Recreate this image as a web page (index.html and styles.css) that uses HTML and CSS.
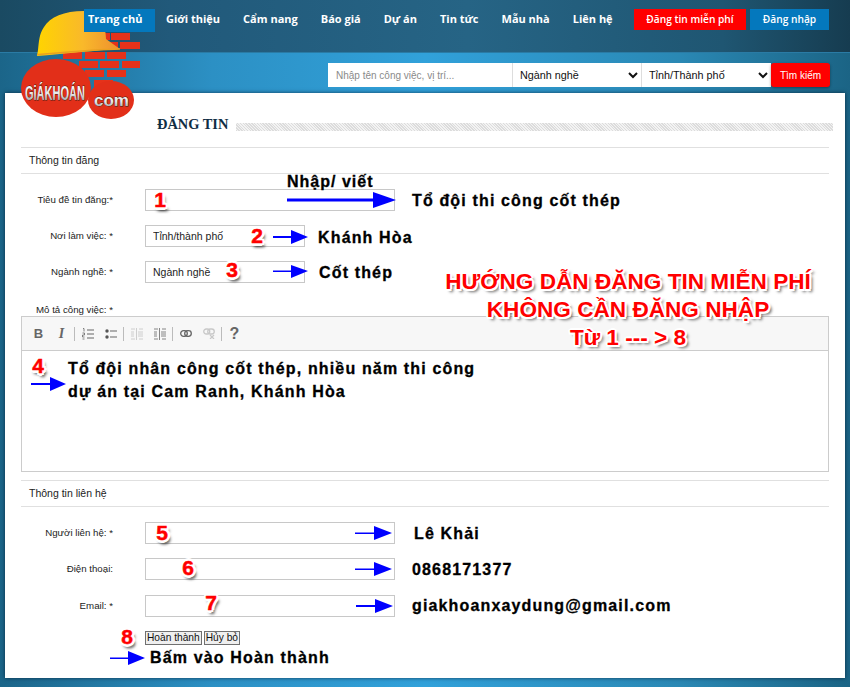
FILE: index.html
```html
<!DOCTYPE html>
<html lang="vi">
<head>
<meta charset="utf-8">
<title>Đăng tin</title>
<link rel="stylesheet" href="styles.css">
</head>
<body>
<div class="page">
  <header class="topbar">
    <nav class="nav">
      <a class="nav-item active">Trang chủ</a>
      <a class="nav-item">Giới thiệu</a>
      <a class="nav-item">Cẩm nang</a>
      <a class="nav-item">Báo giá</a>
      <a class="nav-item">Dự án</a>
      <a class="nav-item">Tin tức</a>
      <a class="nav-item">Mẫu nhà</a>
      <a class="nav-item">Liên hệ</a>
    </nav>
    <a class="top-btn post">Đăng tin miễn phí</a>
    <a class="top-btn login">Đăng nhập</a>
  </header>
  <div class="searchbar">
    <input class="search-input" placeholder="Nhập tên công việc, vị trí...">
    <select class="search-select job"><option>Ngành nghề</option></select>
    <select class="search-select city"><option>Tỉnh/Thành phố</option></select>
    <button class="search-btn">Tìm kiếm</button>
  </div>
  <main class="panel">
    <div class="title-row">
      <h1 class="title">ĐĂNG TIN</h1>
      <div class="hatch"></div>
    </div>
    <div class="section-head">Thông tin đăng</div>
    <div class="rows first">
      <div class="row"><label class="lbl">Tiêu đề tin đăng:*</label><input class="field wide"></div>
      <div class="row"><label class="lbl">Nơi làm việc: *</label><input class="field narrow" value="Tỉnh/thành phố"></div>
      <div class="row"><label class="lbl">Ngành nghề: *</label><input class="field narrow" value="Ngành nghề"></div>
    </div>
    <label class="lbl desc">Mô tả công việc: *</label>
    <div class="editor">
      <div class="toolbar">
        <span class="tool tb">B</span>
        <span class="tool ti">I</span>
        <span class="sep"></span>
        <span class="tool"><svg width="12" height="12" viewBox="0 0 12 12"><path d="M5 2h7M5 6h7M5 10h7" stroke="#666" stroke-width="1.2"/><path d="M1 0.5h1v3M0.5 5h2v2h-2v2h2M0.5 11h2" stroke="#666" fill="none" stroke-width=".8"/></svg></span>
        <span class="tool"><svg width="12" height="12" viewBox="0 0 12 12"><path d="M5 3h7M5 9h7" stroke="#666" stroke-width="1.2"/><circle cx="2" cy="3" r="1.7" fill="#555"/><circle cx="2" cy="9" r="1.7" fill="#555"/></svg></span>
        <span class="sep"></span>
        <span class="tool"><svg width="12" height="12" viewBox="0 0 12 12"><path d="M0 1h4M8 1h4M7 4h5M7 6h5M7 8h5M0 11h4M8 11h4M0 4h3M0 6h3M0 8h3M5.500 0v12" stroke="#c8c8c8" stroke-width=".9"/></svg></span>
        <span class="tool"><svg width="12" height="12" viewBox="0 0 12 12"><path d="M0 1h4M8 1h4M7 4h5M7 6h5M7 8h5M0 11h4M8 11h4M0 4h3M0 6h3M0 8h3M5.500 0v12" stroke="#777" stroke-width=".9"/></svg></span>
        <span class="sep"></span>
        <span class="tool"><svg width="12" height="7" viewBox="0 0 12 7"><rect x=".7" y=".7" width="6.600" height="5.600" rx="2.800" fill="none" stroke="#666" stroke-width="1.300"/><rect x="4.700" y=".7" width="6.600" height="5.600" rx="2.800" fill="none" stroke="#666" stroke-width="1.300"/></svg></span>
        <span class="tool"><svg width="12" height="11" viewBox="0 0 12 11"><rect x=".75" y="1" width="6" height="5" rx="2.500" fill="none" stroke="#c8c8c8" stroke-width="1.300"/><rect x="4.750" y="1" width="6.500" height="5" rx="2.500" fill="none" stroke="#c8c8c8" stroke-width="1.300"/><path d="M7 7l4 4M11 7l-4 4" stroke="#c8c8c8" stroke-width="1.200"/></svg></span>
        <span class="sep"></span>
        <span class="tool help">?</span>
      </div>
      <div class="editor-body"></div>
    </div>
    <div class="section-head second">Thông tin liên hệ</div>
    <div class="rows contact">
      <div class="row"><label class="lbl">Người liên hệ: *</label><input class="field wide"></div>
      <div class="row"><label class="lbl">Điện thoại:</label><input class="field wide"></div>
      <div class="row r-email"><label class="lbl">Email: *</label><input class="field wide"></div>
    </div>
    <div class="actions">
      <button class="act">Hoàn thành</button><button class="act">Hủy bỏ</button>
    </div>
  </main>
</div>

<svg class="logo" width="125" height="115" viewBox="20 8 125 115" aria-label="Giá khoán logo">
  <defs>
    <linearGradient id="hat" x1="0" x2="1" y1="0" y2="0">
      <stop offset="0" stop-color="#ffd400"/><stop offset=".55" stop-color="#f9b92a"/><stop offset="1" stop-color="#ee8f2f"/>
    </linearGradient>
    <linearGradient id="silver" x1="0" x2="0" y1="0" y2="1">
      <stop offset="0" stop-color="#fff"/><stop offset=".55" stop-color="#e8e8e8"/><stop offset="1" stop-color="#8a8a8a"/>
    </linearGradient>
  </defs>
  <g fill="#e5321a">
    <rect x="102" y="33" width="8" height="7"/><rect x="111" y="33" width="19" height="7"/>
    <rect x="100" y="42" width="18" height="7"/><rect x="120" y="42" width="20" height="7"/>
    <rect x="63" y="52" width="19" height="7"/><rect x="85" y="52" width="20" height="7"/><rect x="107" y="52" width="19" height="7"/>
    <rect x="79" y="61" width="19" height="7"/><rect x="100" y="61" width="19" height="7"/><rect x="122" y="61" width="18" height="7"/>
    <rect x="85" y="70" width="19" height="7"/><rect x="107" y="70" width="19" height="7"/>
    <rect x="94" y="80" width="19" height="8"/>
  </g>
  <path d="M38 50C39 42 39 34 44 27C50 17 64 11 84 11C100 11 106 26 106 39L120 49C96 50 62 54 37 56Z" fill="url(#hat)"/>
  <path d="M37 54.500C62 52.500 96 49.500 120 49" stroke="#e9a020" stroke-width="1.500" fill="none"/>
  <ellipse cx="56" cy="88" rx="35" ry="29" fill="#e22f19"/>
  <ellipse cx="111" cy="100" rx="23" ry="19" fill="#e22f19"/>
  <text class="logo-main" transform="translate(25 100) scale(.55 1)">GiÁKHOÁN</text>
  <text class="logo-com" x="94" y="106">com</text>
</svg>

<div class="notes">
  <svg class="arrows" width="850" height="687" viewBox="0 0 850 687" aria-hidden="true">
    <g fill="#0000ff">
      <path d="M287 198.500H373V192L396 200L373 208V201.500H287Z"/>
      <path d="M273 236H291V230L308 237L291 244V238H273Z"/>
      <path d="M273 270.500H291V265L308 271L291 278V272H273Z"/>
      <path d="M31 383H50V377L66 384L50 391V385H31Z"/>
      <path d="M355 532.500H374V526L392 533L374 540V534H355Z"/>
      <path d="M355 568.500H374V562L392 569L374 576V570H355Z"/>
      <path d="M356 605H375V599L393 606L375 613V607H356Z"/>
      <path d="M110 657.500H128V651L145 658L128 665V659H110Z"/>
    </g>
  </svg>
  <span class="num n1">1</span>
  <span class="num n2">2</span>
  <span class="num n3">3</span>
  <span class="num n4">4</span>
  <span class="num n5">5</span>
  <span class="num n6">6</span>
  <span class="num n7">7</span>
  <span class="num n8">8</span>
  <span class="note t-write">Nhập/ viết</span>
  <span class="note t-title">Tổ đội thi công cốt thép</span>
  <span class="note t-place">Khánh Hòa</span>
  <span class="note t-job">Cốt thép</span>
  <span class="note t-d1">Tổ đội nhân công cốt thép, nhiều năm thi công</span>
  <span class="note t-d2">dự án tại Cam Ranh, Khánh Hòa</span>
  <span class="note t-name">Lê Khải</span>
  <span class="note t-phone">0868171377</span>
  <span class="note t-mail">giakhoanxaydung@gmail.com</span>
  <span class="note t-click">Bấm vào Hoàn thành</span>
  <div class="guide">
    <div>HƯỚNG DẪN ĐĂNG TIN MIỄN PHÍ</div>
    <div>KHÔNG CẦN ĐĂNG NHẬP</div>
    <div>Từ 1 --- &gt; 8</div>
  </div>
</div>
</body>
</html>
```
FILE: styles.css
```css
* { box-sizing: border-box; }
html, body { margin: 0; padding: 0; }
body {
  position: relative;
  width: 850px;
  height: 687px;
  overflow: hidden;
  font-family: "Liberation Sans", Arial, sans-serif;
  background: linear-gradient(90deg, #1b6589 0%, #2c90c4 25%, #31a1da 50%, #2a88b4 80%, #1b6485 100%);
}
.page { position: relative; width: 850px; }

/* top bar */
.topbar {
  height: 53px;
  display: flex;
  align-items: flex-start;
  padding: 9px 0 0 84px;
  background: linear-gradient(90deg, #1a4a62 0%, #21597a 20%, #266485 55%, #1f5672 85%, #163c50 100%);
  box-shadow: inset 0 -1px 0 #2a7ba5;
}
.nav { position: relative; z-index: 3; display: flex; flex: none; width: 550px; }
.nav-item {
  display: block;
  flex: none;
  height: 23px;
  padding: 2px 0 0;
  margin-right: 23px;
  color: #fff;
  font: 700 11px/16px "Open Sans", sans-serif;
  white-space: nowrap;
}
.nav-item.active {
  width: 71px;
  padding-left: 4px;
  margin-right: 11px;
  background: #0478bd;
}
.top-btn {
  display: block;
  flex: none;
  height: 21px;
  color: #fff;
  font: 600 10.200px/20px "Open Sans", sans-serif;
  text-align: center;
}
.top-btn.post { width: 112px; background: #ff0000; }
.top-btn.login { width: 79px; margin-left: 4px; background: #0478bd; }

/* search */
.searchbar {
  height: 40px;
  display: flex;
  align-items: flex-start;
  padding: 10px 0 0 328px;
}
.search-input, .search-select { height: 24px; border: 0; background: #fff; }
.search-input {
  width: 184px;
  padding: 0 8px;
  font: 10px "Liberation Sans", sans-serif;
  outline: 0;
}
.search-input::placeholder { color: #8a8a8a; }
.search-select {
  padding: 0 3px;
  border-left: 1px solid #ddd;
  color: #111;
  font: 10.800px "Liberation Sans", sans-serif;
}
.search-select.job { width: 129px; }
.search-select.city { width: 130px; }
.search-btn {
  width: 59px;
  height: 24px;
  border: 0;
  border-radius: 3px;
  padding: 0;
  background: #ff0000;
  color: #fff;
  font: 10px "Liberation Sans", sans-serif;
  box-shadow: 0 1px 3px rgba(0,0,0,.4);
}

/* panel */
.panel {
  width: 840px;
  height: 585px;
  margin-left: 5px;
  padding: 0 16px;
  background: #fff;
  box-shadow: 0 0 4px rgba(0,20,40,.7);
}
.title-row {
  height: 54px;
  display: flex;
  align-items: flex-start;
  padding-top: 22px;
  padding-left: 136px;
}
.title {
  flex: none;
  margin: 0;
  width: 79px;
  color: #0f2d44;
  font: 700 14.400px/18px "Liberation Serif", serif;
  white-space: nowrap;
}
.hatch {
  flex: none;
  width: 597px;
  height: 8px;
  margin-top: 8px;
  background: repeating-linear-gradient(45deg, #dcdcdc 0 1px, #f3f3f3 1px 2px);
}
.section-head {
  height: 27px;
  padding: 0 8px;
  border-top: 1px solid #e0e0e0;
  border-bottom: 1px solid #e0e0e0;
  color: #222;
  font-size: 10.500px;
  line-height: 25px;
}
.section-head.second { margin-top: 8px; }
.rows { display: flex; flex-direction: column; gap: 14px; }
.rows.first { padding-top: 15px; }
.rows.contact { padding-top: 15px; }
.row { display: flex; align-items: center; height: 22px; }
.r-email { margin-top: 1px; }
.lbl {
  display: block;
  width: 92px;
  margin-right: 32px;
  color: #222;
  font-size: 9.700px;
  line-height: 14px;
  text-align: right;
  white-space: nowrap;
}
.lbl.desc { margin-top: 20px; height: 13px; }
.field {
  height: 22px;
  padding: 0 7px;
  border: 1px solid #c8c8c8;
  background: #fff;
  color: #222;
  font: 10.500px "Liberation Sans", sans-serif;
  outline: 0;
}
.field.wide { width: 250px; }
.field.narrow { width: 160px; }

/* editor */
.editor { height: 156px; border: 1px solid #ccc; }
.toolbar {
  display: flex;
  align-items: center;
  height: 34px;
  padding-left: 5px;
  background: #f7f7f7;
  border-bottom: 1px solid #ccc;
}
.tool {
  display: flex;
  align-items: center;
  justify-content: center;
  width: 23px;
  height: 20px;
  color: #666;
}
.tb { font: 700 13px "Liberation Sans", sans-serif; }
.ti { font: italic 700 14px "Liberation Serif", serif; }
.help { font: 700 16px "Liberation Sans", sans-serif; }
.sep { width: 1px; height: 14px; margin: 0 1px; background: #bbb; }
.editor-body { height: 120px; background: #fff; }

/* actions */
.actions { display: flex; padding: 14px 0 0 124px; }
.act {
  height: 14px;
  padding: 0 1px;
  margin-right: 2px;
  border: 1px solid #707070;
  border-radius: 0;
  background: #efefef;
  color: #111;
  font: 10.200px/12px "Liberation Sans", sans-serif;
}

/* logo */
.logo { position: absolute; left: 20px; top: 8px; z-index: 2; }
.logo-main { font: 700 20px "Liberation Sans", sans-serif; fill: url(#silver); stroke: #3a2018; stroke-width: .8px; paint-order: stroke; }
.logo-com { font: 700 17px "Liberation Sans", sans-serif; fill: url(#silver); stroke: #3a2018; stroke-width: .8px; paint-order: stroke; }

/* annotation layer */
.notes { position: absolute; inset: 0; z-index: 4; pointer-events: none; }
.arrows { position: absolute; left: 0; top: 0; }
.num {
  position: absolute;
  width: 20px;
  margin-left: -10px;
  text-align: center;
  color: #ff0000;
  font: 700 21px/24px "Liberation Sans", sans-serif;
  -webkit-text-stroke: .5px #ff0000;
  text-shadow:
    -3px 0 0 #fff, 3px 0 0 #fff, 0 -3px 0 #fff, 0 3px 0 #fff,
    -2px -2px 0 #fff, 2px -2px 0 #fff, -2px 2px 0 #fff, 2px 2px 0 #fff,
    3px 4px 3px rgba(0,0,0,.6), 1px 4px 3px rgba(0,0,0,.4);
}
.n1 { left: 160px; top: 188px; }
.n2 { left: 257px; top: 224px; }
.n3 { left: 232px; top: 258px; }
.n4 { left: 38px; top: 354px; }
.n5 { left: 162px; top: 521px; }
.n6 { left: 188px; top: 556px; }
.n7 { left: 211px; top: 591px; }
.n8 { left: 127px; top: 625px; }
.note {
  position: absolute;
  color: #000;
  font: 700 16px/18px "Liberation Sans", sans-serif;
  letter-spacing: 1.150px;
  -webkit-text-stroke: .3px #000;
  white-space: nowrap;
}
.t-write { left: 287px; top: 173px; letter-spacing: 1px; }
.t-title { left: 412px; top: 192px; }
.t-place { left: 318px; top: 229px; }
.t-job { left: 319px; top: 264px; }
.t-d1 { left: 68px; top: 360px; }
.t-d2 { left: 68px; top: 383px; }
.t-name { left: 414px; top: 525px; }
.t-phone { left: 412px; top: 561px; }
.t-mail { left: 412px; top: 597px; }
.t-click { left: 150px; top: 649px; }
.guide {
  position: absolute;
  left: 428px;
  top: 268px;
  width: 400px;
  color: #ff0000;
  font: 700 22.600px/28px "Liberation Sans", sans-serif;
  text-align: center;
  white-space: nowrap;
  text-shadow:
    -2px 0 0 #fff, 2px 0 0 #fff, 0 -2px 0 #fff, 0 2px 0 #fff,
    -1.500px -1.500px 0 #fff, 1.500px -1.500px 0 #fff, -1.500px 1.500px 0 #fff, 1.500px 1.500px 0 #fff,
    3px 3px 3px rgba(0,0,0,.6);
}
```
